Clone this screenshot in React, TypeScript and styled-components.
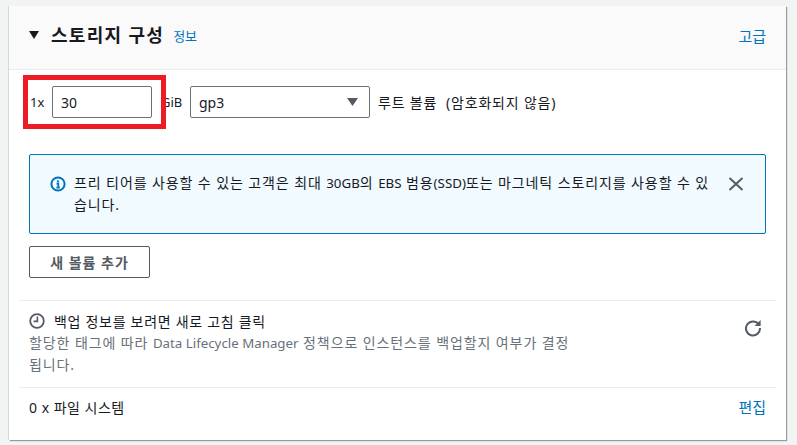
import styled, { createGlobalStyle } from "styled-components";

const GlobalStyle = createGlobalStyle`
  html, body {
    margin: 0;
    padding: 0;
    background: #f2f3f3;
  }
  body {
    font-family: "Noto Sans", "Noto Sans CJK KR", sans-serif;
    font-size: 14px;
    letter-spacing: 0.7px;
    color: #16191f;
  }
`;

const Page = styled.div`
  width: 797px;
  height: 445px;
  padding: 6px 11px 0 9px;
  box-sizing: border-box;
  overflow: hidden;
`;

const Card = styled.section`
  position: relative;
  height: 434px;
  background: #fff;
  box-shadow: 1px 1px 1px 0 rgba(0, 28, 36, 0.4), -1px 0 0 0 rgba(0, 28, 36, 0.12);
`;

const Header = styled.header`
  display: flex;
  align-items: center;
  height: 64px;
  box-sizing: border-box;
  padding: 0 20px 5px;
  background: #fafafa;
  border-bottom: 1px solid #e9ebed;
`;

const Title = styled.h2`
  margin: 0 0 0 12px;
  font-size: 18px;
  font-weight: 700;
  letter-spacing: 1.3px;
  line-height: 24px;
`;

const Link = styled.a<{ $push?: boolean }>`
  color: #0073bb;
  font-size: ${(p) => (p.$push ? "15px" : "13px")};
  letter-spacing: 0;
  margin-left: ${(p) => (p.$push ? "auto" : "9px")};
`;

const Latin = styled.span`
  font-size: 13.3px;
  letter-spacing: 0;
`;

const VolumeRow = styled.div`
  display: flex;
  align-items: center;
  height: 32px;
  margin-top: 16px;
  padding-left: 21px;
`;

const Field = styled.div<{ $w: number }>`
  display: flex;
  align-items: center;
  justify-content: space-between;
  width: ${(p) => p.$w}px;
  height: 32px;
  box-sizing: border-box;
  padding: 0 8px;
  border: 1px solid #687078;
  border-radius: 2px;
  font-size: 14px;
  letter-spacing: 0;
`;

const SelectArrow = styled.svg`
  width: 11px;
  height: 8px;
  margin-right: 3px;
`;

const Multiplier = styled.span`
  width: 22px;
  font-size: 13px;
  letter-spacing: 0;
`;

const Unit = styled.span`
  width: 38px;
  padding-left: 9px;
  box-sizing: border-box;
  font-size: 13px;
  letter-spacing: 0;
`;

const RootLabel = styled.span`
  margin-left: 8px;
  white-space: pre;
  letter-spacing: 0.8px;
`;

const Highlight = styled.div`
  position: absolute;
  left: 14px;
  top: 69px;
  width: 143px;
  height: 54px;
  box-sizing: border-box;
  border: 5px solid #ed1c24;
  pointer-events: none;
`;

const Alert = styled.div`
  display: flex;
  height: 80px;
  box-sizing: border-box;
  margin: 36px 20px 0;
  padding: 12px 20px;
  background: #f1faff;
  border: 1px solid #0073bb;
  border-radius: 2px;
`;

const AlertIcon = styled.svg`
  flex: none;
  width: 16px;
  height: 16px;
  margin-top: 9px;
  margin-right: 8px;
`;

const AlertText = styled.p`
  width: 638px;
  margin: 5px 0 0;
  line-height: 22px;
  letter-spacing: 0.9px;
  white-space: nowrap;
`;

const CloseIcon = styled.svg`
  flex: none;
  width: 16px;
  height: 16px;
  margin: 9px 0 0 16px;
`;

const AddButton = styled.button`
  display: block;
  width: 121px;
  height: 32px;
  margin: 12px 0 0 20px;
  padding: 0;
  background: #fff;
  border: 1px solid #545b64;
  border-radius: 2px;
  color: #545b64;
  font: 700 14px "Noto Sans", "Noto Sans CJK KR", sans-serif;
  letter-spacing: 1px;
`;

const Divided = styled.div`
  margin: 22px 10px 0;
  border-top: 1px solid #eaeded;
`;

const Backup = styled.div`
  display: flex;
  justify-content: space-between;
  height: 86px;
  box-sizing: border-box;
  padding: 10px 20px 0;
`;

const BackupTitle = styled.div`
  display: flex;
  align-items: center;
  gap: 9px;
  height: 20px;
`;

const BackupNote = styled.p`
  width: 550px;
  margin: 1px 0 0;
  color: #687078;
  line-height: 22px;
  letter-spacing: 0.9px;
  white-space: nowrap;
`;

const RefreshIcon = styled.svg`
  flex: none;
  width: 18px;
  height: 18px;
  margin: 8px 4px 0 0;
`;

const FileRow = styled.div`
  display: flex;
  align-items: center;
  justify-content: space-between;
  margin: 0 10px;
  padding: 6px 10px 0;
  height: 32px;
  box-sizing: border-box;
  border-top: 1px solid #eaeded;
  letter-spacing: 0.5px;
`;

export default function App() {
  return (
    <>
      <GlobalStyle />
      <Page>
        <Card>
          <Header>
            <svg width="10" height="8" viewBox="0 0 10 8">
              <path d="M0 0h10L5 8z" fill="#16191f" />
            </svg>
            <Title>스토리지 구성</Title>
            <Link>정보</Link>
            <Link $push>고급</Link>
          </Header>
          <VolumeRow>
            <Multiplier>1x</Multiplier>
            <Field $w={100}>30</Field>
            <Unit>GiB</Unit>
            <Field $w={180}>
              gp3
              <SelectArrow viewBox="0 0 11 8">
                <path d="M0 0h11L5.5 8z" fill="#545b64" />
              </SelectArrow>
            </Field>
            <RootLabel>루트 볼륨  (암호화되지 않음)</RootLabel>
          </VolumeRow>
          <Highlight />
          <Alert>
            <AlertIcon viewBox="0 0 16 16">
              <circle cx="8" cy="8" r="6.6" fill="none" stroke="#0073bb" strokeWidth="2" />
              <path d="M8 4.2v1.8M6.6 7.5H8.3v4M6.4 11.6h3.4" fill="none" stroke="#0073bb" strokeWidth="1.8" />
            </AlertIcon>
            <AlertText>
              프리 티어를 사용할 수 있는 고객은 최대 <Latin>30GB</Latin>의 <Latin>EBS</Latin> 범용
              <Latin>(SSD)</Latin>또는 마그네틱 스토리지를 사용할 수 있
              <br />
              습니다.
            </AlertText>
            <CloseIcon viewBox="0 0 16 16">
              <path d="M1.5 2l13 12M14.5 2l-13 12" fill="none" stroke="#545b64" strokeWidth="2" />
            </CloseIcon>
          </Alert>
          <AddButton>새 볼륨 추가</AddButton>
          <Divided />
          <Backup>
            <div>
              <BackupTitle>
                <svg width="16" height="16" viewBox="0 0 16 16">
                  <circle cx="8" cy="8" r="6.8" fill="none" stroke="#545b64" strokeWidth="1.8" />
                  <path d="M8.4 3.6v4.8H4.6" fill="none" stroke="#545b64" strokeWidth="1.6" />
                </svg>
                백업 정보를 보려면 새로 고침 클릭
              </BackupTitle>
              <BackupNote>
                할당한 태그에 따라 <Latin>Data Lifecycle Manager</Latin> 정책으로 인스턴스를 백업할지 여부가 결정
                <br />
                됩니다.
              </BackupNote>
            </div>
            <RefreshIcon viewBox="0 0 18 18">
              <path d="M14.6 5.2A7 7 0 1 0 16 9" fill="none" stroke="#545b64" strokeWidth="2" />
              <path d="M16.6 1v6h-6z" fill="#545b64" />
            </RefreshIcon>
          </Backup>
          <FileRow>
            <span>0 x 파일 시스템</span>
            <Link $push>편집</Link>
          </FileRow>
        </Card>
      </Page>
    </>
  );
}
